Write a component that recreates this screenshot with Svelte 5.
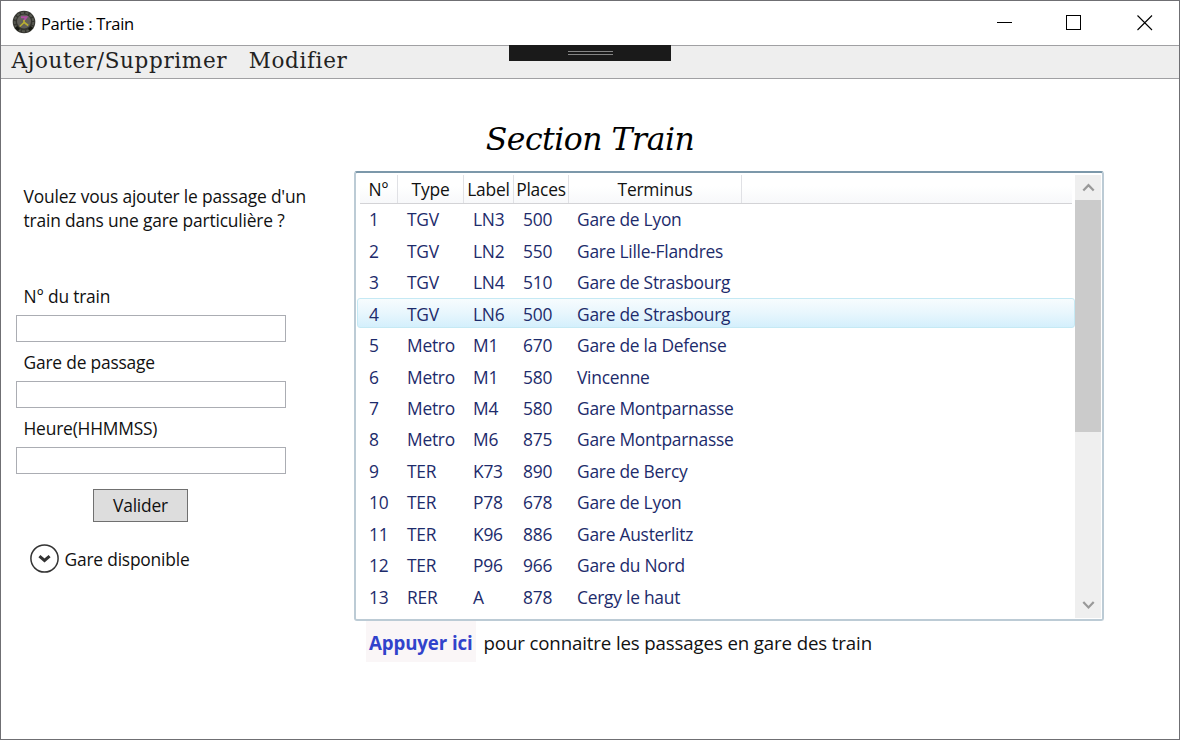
<script>
  const rows = [
    ['1', 'TGV', 'LN3', '500', 'Gare de Lyon'],
    ['2', 'TGV', 'LN2', '550', 'Gare Lille-Flandres'],
    ['3', 'TGV', 'LN4', '510', 'Gare de Strasbourg'],
    ['4', 'TGV', 'LN6', '500', 'Gare de Strasbourg'],
    ['5', 'Metro', 'M1', '670', 'Gare de la Defense'],
    ['6', 'Metro', 'M1', '580', 'Vincenne'],
    ['7', 'Metro', 'M4', '580', 'Gare Montparnasse'],
    ['8', 'Metro', 'M6', '875', 'Gare Montparnasse'],
    ['9', 'TER', 'K73', '890', 'Gare de Bercy'],
    ['10', 'TER', 'P78', '678', 'Gare de Lyon'],
    ['11', 'TER', 'K96', '886', 'Gare Austerlitz'],
    ['12', 'TER', 'P96', '966', 'Gare du Nord'],
    ['13', 'RER', 'A', '878', 'Cergy le haut']
  ];
  const heads = ['N°', 'Type', 'Label', 'Places', 'Terminus'];
  const fields = ['N° du train', 'Gare de passage', 'Heure(HHMMSS)'];
  let selected = $state(3);
</script>

<div class="window">
  <header class="title">
    <svg class="logo" width="24" height="24" viewBox="0 0 24 24">
      <circle cx="12" cy="12" r="11.3" fill="#34342f" />
      <circle cx="12" cy="12" r="9.3" fill="none" stroke="#565850" stroke-width="2" stroke-dasharray="3 1.5" />
      <circle cx="12" cy="11.5" r="7" fill="#62605a" />
      <path d="M4 17 L7 20 M20 17 L17 20" stroke="#161811" stroke-width="3" />
      <path d="M9 7.2 H14.5 L12 10.5" fill="none" stroke="#b04da4" stroke-width="1.9" />
      <path d="M12 10 V12.5 L7.8 16.5 M12 12.3 L16.2 15.5" fill="none" stroke="#b9ae32" stroke-width="1.7" />
    </svg>
    <span class="caption">Partie : Train</span>
    <svg class="controls" width="156" height="16" viewBox="0 0 156 16" fill="none" stroke="#000" shape-rendering="crispEdges">
      <path d="M0 7.5 H15" />
      <rect x="69.5" y="0.5" width="14" height="14" />
      <path d="M140.5 0.5 L155 15 M155 0.5 L140.5 15" shape-rendering="auto" stroke-width="1.1" />
    </svg>
  </header>

  <nav class="menu">
    <span>Ajouter/Supprimer</span>
    <span>Modifier</span>
    <div class="grip"><i></i></div>
  </nav>

  <h1>Section Train</h1>

  <main>
    <section class="form">
      <p>Voulez vous ajouter le passage d'un<br />train dans une gare particulière ?</p>
      {#each fields as f}
        <label><span>{f}</span><input type="text" /></label>
      {/each}
      <button class="ok">Valider</button>
      <div class="expander">
        <svg width="30" height="30" viewBox="0 0 30 30" fill="none" stroke="#333">
          <circle cx="14.5" cy="15.5" r="13.6" stroke-width="1.5" />
          <path d="M9.4 13.1 L14.5 17.5 L19.6 13.1" stroke-width="3" />
        </svg>
        <span>Gare disponible</span>
      </div>
    </section>

    <section class="right">
      <div class="list">
        <div class="table">
          <div class="thead">
            {#each heads as h}<div><span>{h}</span></div>{/each}
            <div class="rest"></div>
          </div>
          <div class="rows">
            {#each rows as r, i}
              <!-- svelte-ignore a11y_click_events_have_key_events, a11y_no_static_element_interactions -->
              <div class="row" class:sel={i === selected} onclick={() => (selected = i)}>
                {#each r as c}<span>{c}</span>{/each}
              </div>
            {/each}
          </div>
        </div>
        <div class="scroll">
          <svg width="26" height="25" viewBox="0 0 26 25" fill="none" stroke="#999" stroke-width="2.2"><path d="M8.3 15.6 L13.5 10.2 L18.7 15.6" /></svg>
          <div class="thumb"></div>
          <svg width="26" height="26" viewBox="0 0 26 26" fill="none" stroke="#999" stroke-width="2.2"><path d="M8.3 10 L13.5 15.4 L18.7 10" /></svg>
        </div>
      </div>
      <div class="foot"><b>Appuyer ici</b><span class="note">pour connaitre les passages en gare des train</span></div>
    </section>
  </main>
</div>

<style>
  :global(body) { margin: 0; background: #fff; }
  .window, .window * { box-sizing: border-box; }
  .window {
    width: 1180px; height: 740px; overflow: hidden;
    display: flex; flex-direction: column;
    border: 1px solid #6f6f73; background: #fff; color: #111;
    font: 17.4px/24px "Open Sans", "Noto Sans", sans-serif;
    letter-spacing: -0.2px; white-space: nowrap;
  }
  .title { height: 44px; flex: none; display: flex; align-items: center; padding: 0 26px 2px 11px; }
  .caption { margin-left: 5px; padding-top: 3px; font-size: 16.5px; letter-spacing: -0.32px; color: #000; }
  .controls { margin-left: auto; margin-top: 1px; }
  .menu {
    height: 34px; flex: none; display: flex; position: relative; padding-left: 10.5px; gap: 21.5px;
    background: #eee; border-top: 1px solid #a0a0a3; border-bottom: 1px solid #a0a0a3;
    font: 21.5px/29px "DejaVu Serif", serif; color: #222; letter-spacing: 0.66px;
  }
  .grip {
    position: absolute; left: 508px; top: -1px; width: 162px; height: 16px;
    display: flex; justify-content: center; align-items: center; background: #1a1a1a;
  }
  .grip i { width: 45px; height: 4px; border-top: 1px solid #858585; border-bottom: 1px solid #858585; }
  h1 {
    margin: 0; height: 92px; flex: none; padding-top: 40px; text-align: center; color: #000;
    font: italic 400 31.5px/40px "DejaVu Serif", serif; letter-spacing: -0.5px;
  }
  main { display: flex; flex: 1; }
  .form { width: 353px; padding: 13px 0 0 15px; display: flex; flex-direction: column; }
  p { margin: 0 0 52px 7.5px; letter-spacing: -0.17px; }
  label { display: flex; flex-direction: column; height: 66px; }
  label span { margin-left: 7.5px; height: 31px; align-self: flex-start; }
  input { width: 270px; height: 27px; border: 1px solid #abadb3; padding: 0 4px; background: #fff; font: inherit; }
  .ok {
    width: 95px; height: 33px; margin: 7px 0 0 77px; padding: 0 0 2px; border: 1px solid #707070;
    background: #ddd; color: #111; font: inherit; letter-spacing: inherit;
  }
  .expander { display: flex; align-items: center; gap: 5px; margin: 21px 0 0 13.5px; }
  .expander span { padding-top: 1px; }
  .right { width: 750px; }
  .list {
    height: 450px; display: flex; padding: 2px 1px 1px 1px; border: 2px solid #bccbd5;
    border-top-color: #7c98aa; border-radius: 3px; background: #fff;
  }
  .table { width: 718px; }
  .thead {
    display: grid; grid-template-columns: 38px 66px 50px 55px 173px 1fr; height: 29px;
    margin: 0 3px 0 3px; border-bottom: 1px solid #d3d3d6;
    background: linear-gradient(#fff 40%, #f7f8fa);
  }
  .thead div { display: flex; justify-content: center; align-items: center; border-right: 1px solid #e0e1e5; }
  .thead .rest { border: 0; }
  .row {
    display: grid; grid-template-columns: 38px 66px 50px 54px 1fr; height: 30px;
    margin-bottom: 1.45px; padding: 1.4px 0 0 11px; line-height: 26px; color: #1d2b6b;
    border: 1px solid transparent; border-radius: 3px; letter-spacing: -0.25px;
  }
  .sel { background: linear-gradient(#f7fcfe, #e8f6fd 50%, #d4effc); border-color: #c5e9f4; }
  .scroll { width: 26px; height: 443px; display: flex; flex-direction: column; background: #efefef; }
  .thumb { height: 232px; margin-bottom: auto; background: #cbcbcb; }
  .foot { display: flex; align-items: center; height: 41px; margin-left: 12px; font-size: 18.7px; }
  .foot b { width: 110px; height: 41px; padding: 0 3px; line-height: 44px; background: #faf6f7; color: #3143cb; letter-spacing: -0.12px; }
  .note { margin-left: 7.5px; padding-top: 3px; letter-spacing: -0.14px; }
</style>
